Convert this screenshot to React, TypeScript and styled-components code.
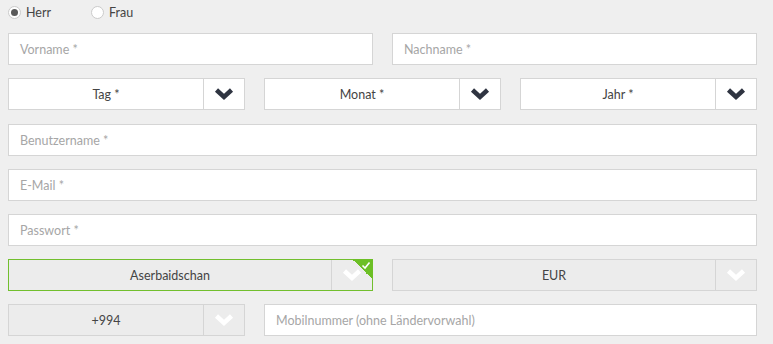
import { createGlobalStyle } from 'styled-components';
import styled from 'styled-components';

const GlobalStyle = createGlobalStyle`
  html, body {
    margin: 0;
    padding: 0;
    background: #efefef;
  }
  body {
    font-family: Lato, 'Open Sans', Arial, sans-serif;
    font-size: 12.5px;
    color: #555;
  }
`;

const Form = styled.form`
  width: 749px;
  padding: 4px 8px 0;
  display: flex;
  flex-direction: column;
  gap: 13px;
`;

const RadioRow = styled.div`
  height: 16px;
  display: flex;
  align-items: center;
`;

const RadioLabel = styled.label`
  display: flex;
  align-items: center;
  width: 83px;
  gap: 5px;
  color: #444;
  font-size: 12.5px;
`;

const RadioDot = styled.span<{ $checked?: boolean }>`
  width: 13px;
  height: 13px;
  box-sizing: border-box;
  border-radius: 50%;
  border: 1px solid #cbcbcb;
  background: #fff;
  display: flex;
  align-items: center;
  justify-content: center;

  &::after {
    content: '';
    width: 7px;
    height: 7px;
    border-radius: 50%;
    background: ${(p) => (p.$checked ? '#5a5a5a' : 'transparent')};
  }
`;

const Row = styled.div<{ $cols: string; $extra?: number }>`
  display: grid;
  grid-template-columns: ${(p) => p.$cols};
  column-gap: 19px;
  margin-bottom: ${(p) => p.$extra ?? 0}px;
`;

const Input = styled.div`
  height: 32px;
  box-sizing: border-box;
  border: 1px solid #d5d5d5;
  background: #fff;
  padding: 0 11px;
  display: flex;
  align-items: center;
  color: #a6a6a6;
`;

const Select = styled.div<{ $tone?: 'white' | 'grey'; $valid?: boolean }>`
  position: relative;
  height: 32px;
  box-sizing: border-box;
  border: 1px solid ${(p) => (p.$valid ? '#72bf2e' : '#d5d5d5')};
  background: ${(p) => (p.$tone === 'grey' ? '#ececec' : '#fff')};
  display: flex;
  color: #444;
`;

const SelectValue = styled.div`
  flex: 1;
  display: flex;
  align-items: center;
  justify-content: center;
`;

const Arrow = styled.div`
  width: 40px;
  border-left: 1px solid #d5d5d5;
  display: flex;
  align-items: center;
  justify-content: center;
`;

const Corner = styled.div`
  position: absolute;
  top: -1px;
  right: -1px;
  width: 21px;
  height: 21px;
  background: linear-gradient(to bottom left, #6cbf25 50%, transparent 50%);
`;

const Chevron = ({ light }: { light?: boolean }) => (
  <svg width="20" height="14" viewBox="0 0 20 14">
    <polyline
      points="2.5,3 10,10 17.5,3"
      fill="none"
      stroke={light ? '#fff' : '#2f3441'}
      strokeWidth="4.5"
      strokeLinejoin="miter"
    />
  </svg>
);

const Tick = () => (
  <svg
    width="10"
    height="9"
    viewBox="0 0 10 9"
    style={{ position: 'absolute', top: 2, right: 2 }}
  >
    <polyline points="1.5,4.5 4,7 8.5,1.5" fill="none" stroke="#fff" strokeWidth="1.6" />
  </svg>
);

type SelectProps = {
  value: string;
  tone?: 'white' | 'grey';
  valid?: boolean;
};

const SelectBox = ({ value, tone = 'white', valid }: SelectProps) => (
  <Select $tone={tone} $valid={valid}>
    <SelectValue>{value}</SelectValue>
    <Arrow>
      <Chevron light={tone === 'grey'} />
    </Arrow>
    {valid && (
      <Corner>
        <Tick />
      </Corner>
    )}
  </Select>
);

export default function App() {
  return (
    <>
      <GlobalStyle />
      <Form>
        <RadioRow>
          <RadioLabel>
            <RadioDot $checked />
            Herr
          </RadioLabel>
          <RadioLabel>
            <RadioDot />
            Frau
          </RadioLabel>
        </RadioRow>
        <Row $cols="1fr 1fr">
          <Input>Vorname *</Input>
          <Input>Nachname *</Input>
        </Row>
        <Row $cols="1fr 1fr 1fr" $extra={1}>
          <SelectBox value="Tag *" />
          <SelectBox value="Monat *" />
          <SelectBox value="Jahr *" />
        </Row>
        <Row $cols="1fr">
          <Input>Benutzername *</Input>
        </Row>
        <Row $cols="1fr">
          <Input>E-Mail *</Input>
        </Row>
        <Row $cols="1fr">
          <Input>Passwort *</Input>
        </Row>
        <Row $cols="1fr 1fr">
          <SelectBox value="Aserbaidschan" tone="grey" valid />
          <SelectBox value="EUR" tone="grey" />
        </Row>
        <Row $cols="237px 1fr">
          <SelectBox value="+994" tone="grey" />
          <Input>Mobilnummer (ohne Ländervorwahl)</Input>
        </Row>
      </Form>
    </>
  );
}
